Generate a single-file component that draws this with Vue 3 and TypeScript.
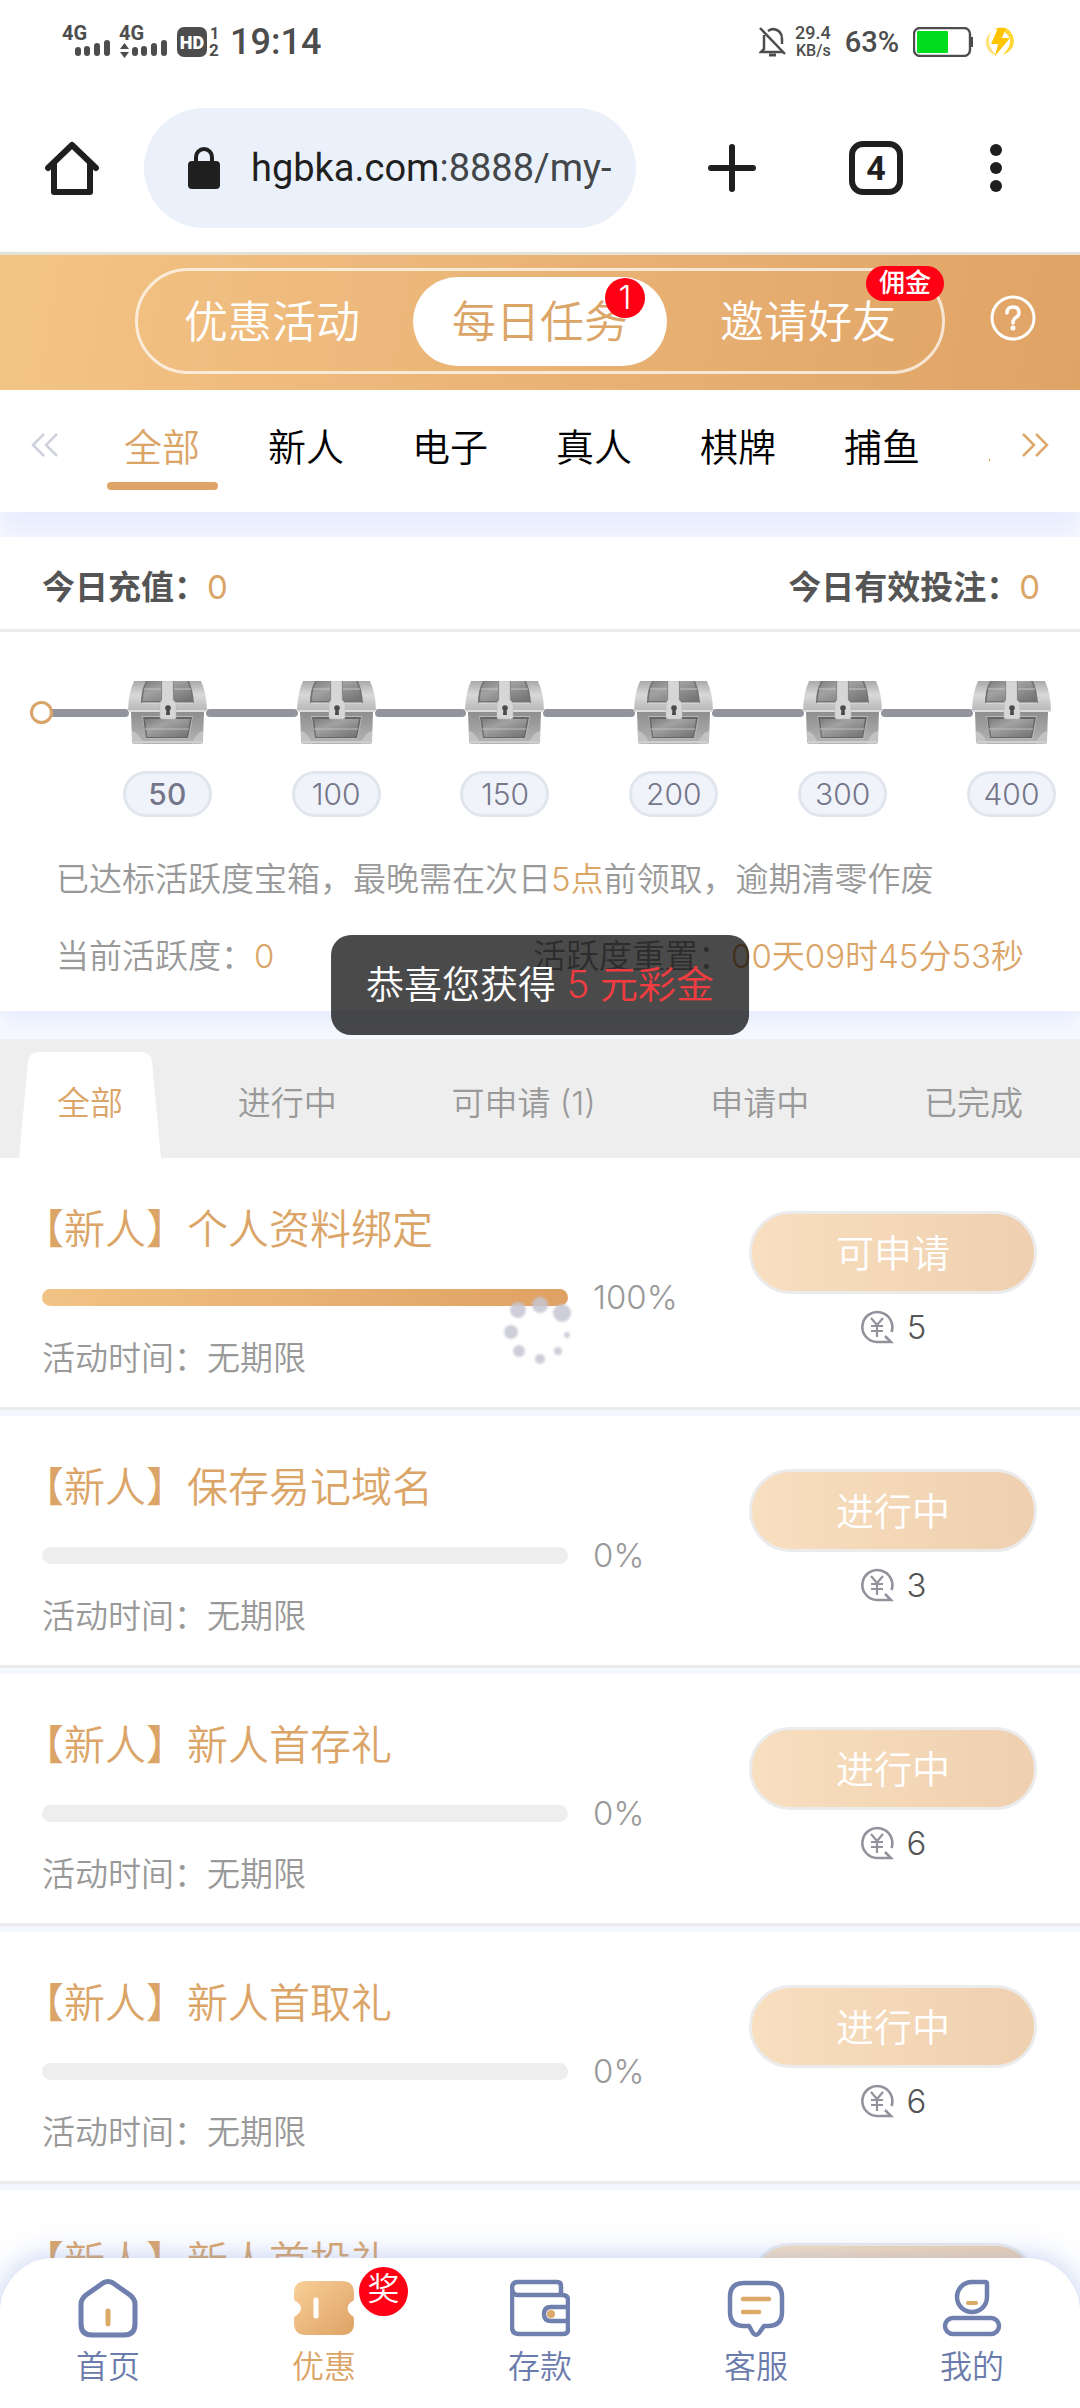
<script setup lang="ts">
import { ref } from 'vue'

interface Task {
  title: string
  percent: number
  status: string
  reward: number
}

const mainTabs = ['优惠活动', '每日任务', '邀请好友']
const activeMain = ref(1)

const categories = ['全部', '新人', '电子', '真人', '棋牌', '捕鱼', '彩票']
const activeCategory = ref(0)

const steps = [50, 100, 150, 200, 300, 400]

const filters = ['全部', '进行中', '可申请 (1)', '申请中', '已完成']
const activeFilter = ref(0)

const tasks: Task[] = [
  { title: '【新人】个人资料绑定', percent: 100, status: '可申请', reward: 5 },
  { title: '【新人】保存易记域名', percent: 0, status: '进行中', reward: 3 },
  { title: '【新人】新人首存礼', percent: 0, status: '进行中', reward: 6 },
  { title: '【新人】新人首取礼', percent: 0, status: '进行中', reward: 6 },
  { title: '【新人】新人首投礼', percent: 0, status: '进行中', reward: 6 },
]

const spinnerDots = [
  { x: 30, y: 6, r: 8 },
  { x: 52, y: 14, r: 9 },
  { x: 57, y: 36, r: 3 },
  { x: 48, y: 52, r: 4 },
  { x: 30, y: 60, r: 5 },
  { x: 9, y: 52, r: 6 },
  { x: 1, y: 33, r: 7 },
  { x: 8, y: 11, r: 8 },
]
</script>

<template>
  <div class="phone">
    <svg class="defs" width="0" height="0" aria-hidden="true">
      <defs>
        <linearGradient id="lid" x1="0" y1="0" x2="0" y2="1">
          <stop offset="0" stop-color="#a9a9a9" />
          <stop offset=".45" stop-color="#d9d9d9" />
          <stop offset="1" stop-color="#b5b5b5" />
        </linearGradient>
        <linearGradient id="body" x1="0" y1="0" x2="0" y2="1">
          <stop offset="0" stop-color="#8e8e8e" />
          <stop offset="1" stop-color="#b4b4b4" />
        </linearGradient>
        <linearGradient id="panel" x1="0" y1="0" x2="1" y2="1">
          <stop offset="0" stop-color="#7c7c7c" />
          <stop offset=".35" stop-color="#a2a2a2" />
          <stop offset="1" stop-color="#707070" />
        </linearGradient>
        <linearGradient id="ticket" x1="0" y1="0" x2="1" y2="1">
          <stop offset="0" stop-color="#f8cf98" />
          <stop offset="1" stop-color="#dea265" />
        </linearGradient>
        <symbol id="chest" viewBox="0 0 79 63">
          <path d="M3 31H76L75 60Q75 63 72 63H7Q4 63 4 60Z" fill="url(#body)" />
          <path d="M4 50Q12 52 15 63H7Q4 63 4 60ZM75 50Q67 52 64 63H72Q75 63 75 60Z" fill="#c2c2c2" />
          <path d="M14 35H65L61 58H18Z" fill="#b9b9b9" />
          <path d="M15 36H64L60 57H18Z" fill="#666" />
          <path d="M17 38H62L59 56H19Z" fill="url(#panel)" />
          <path d="M17 48H61" stroke="#bdbdbd" />
          <path d="M5 61H74" stroke="#cfcfcf" stroke-width="2" />
          <path d="M6 0H73Q79 13 79 31H0Q0 13 6 0Z" fill="url(#lid)" />
          <path d="M18 0H34V22H13Q13 9 18 0ZM45 0H61Q65 9 66 22H45Z" fill="#747474" />
          <path d="M20 0H33V20H15Q15 8 20 0ZM46 0H59Q63 8 64 20H46Z" fill="url(#panel)" />
          <path d="M16 8H33M46 8H63" stroke="#c4c4c4" />
          <path d="M14 22H65" stroke="#dedede" />
          <path d="M0 30H79" stroke="#dcdcdc" stroke-width="2" />
          <path d="M34 0H45V19L48 22V36Q48 38 46 38H34Q32 38 32 36V22L34 19Z" fill="#d6d6d6" stroke="#bdbdbd" stroke-width=".6" />
          <circle cx="40" cy="27" r="2.8" fill="#4a4a4a" />
          <path d="M38.500 28H41.500L42 34H38Z" fill="#4a4a4a" />
        </symbol>
      </defs>
    </svg>

    <header class="status">
      <svg class="signal" width="162" height="36" viewBox="60 24 162 36" fill="#4d4d4d">
        <text x="62" y="40" font-size="20" font-weight="700">4G</text>
        <path d="M78 50V53M87 49V53M97 46V53M107 43V53M135 50V53M144 49V53M154 46V53M164 43V53" stroke="#4d4d4d" stroke-width="6" stroke-linecap="round" />
        <text x="119" y="40" font-size="20" font-weight="700">4G</text>
        <path d="M120 49L124.500 43L129 49ZM120 52L124.500 58L129 52Z" />
        <rect x="177" y="27" width="30" height="30" rx="7" />
        <text x="192" y="49" font-size="18" font-weight="900" text-anchor="middle" fill="#fff">HD</text>
        <text x="210" y="39" font-size="16" font-weight="700">1</text>
        <text x="209" y="56" font-size="17" font-weight="700">2</text>
      </svg>
      <span class="clock">19:14</span>
      <span class="spacer"></span>
      <svg width="28" height="30" viewBox="0 0 28 30" fill="none" stroke="#4d4d4d" stroke-width="2.500">
        <path d="M5 8V22L2 25H24M9 4Q12 2 14 2Q23 3 23 12V17" />
        <path d="M1 1L26 27" />
        <path d="M10 28H17" stroke-width="3" />
      </svg>
      <span class="speed"><b>29.4</b><small>KB/s</small></span>
      <span class="percent">63%</span>
      <svg width="60" height="30" viewBox="0 0 60 30">
        <rect x="1" y="1" width="56" height="28" rx="6" fill="#fff" stroke="#4d4d4d" stroke-width="2.400" />
        <rect x="4" y="4" width="31" height="22" rx="1" fill="#00dc1e" />
        <path d="M59 10V20" stroke="#4d4d4d" stroke-width="2" />
      </svg>
      <svg class="charge" width="32" height="32" viewBox="0 0 32 32">
        <path d="M10 3Q24 -2 29 10Q33 24 18 29Q27 22 26 13Q23 4 10 3Z" fill="#ffd633" />
        <path d="M8 5Q-1 13 3 22Q6 28 13 30Q5 22 5 15Q5 9 8 5Z" fill="#ffe27a" />
        <path d="M14 2H22L18 12H26L11 30L14 18H7Z" fill="#ffc400" />
      </svg>
    </header>

    <div class="toolbar">
      <button class="tool home" aria-label="主页">
        <svg width="54" height="54" viewBox="0 0 54 54" fill="none" stroke="#1f1f1f" stroke-width="6" stroke-linejoin="round" stroke-linecap="round">
          <path d="M3 27L27 4L51 27M9 22V51H45V22" />
        </svg>
      </button>
      <button class="address">
        <svg width="32" height="42" viewBox="0 0 32 42">
          <rect y="14" width="32" height="28" rx="4" fill="#1f1f1f" />
          <path d="M8 16V10A8 8 0 0 1 24 10V16" fill="none" stroke="#1f1f1f" stroke-width="4" />
        </svg>
        <span class="url">hgbka.com<i>:8888/my-</i></span>
      </button>
      <button class="tool" aria-label="新标签页">
        <svg width="48" height="48" viewBox="0 0 48 48" stroke="#1f1f1f" stroke-width="6" stroke-linecap="round"><path d="M24 3V45M3 24H45" /></svg>
      </button>
      <button class="tool"><span class="tabs-count">4</span></button>
      <button class="tool menu" aria-label="菜单">
        <svg width="12" height="48" viewBox="0 0 12 48" fill="#1f1f1f"><circle cx="6" cy="6" r="6" /><circle cx="6" cy="24" r="6" /><circle cx="6" cy="42" r="6" /></svg>
      </button>
    </div>

    <main class="view">
      <div class="head">
        <nav class="switch">
          <button v-for="(tab, i) in mainTabs" :key="tab" :class="{ active: i === activeMain }" @click="activeMain = i">
            {{ tab }}
            <span v-if="i === 1" class="count">1</span>
            <span v-if="i === 2" class="tag">佣金</span>
          </button>
        </nav>
        <button class="help" aria-label="帮助">
          <svg width="46" height="46" viewBox="0 0 46 46" fill="none" stroke="#fff" stroke-width="3" stroke-linecap="round">
            <circle cx="23" cy="23" r="21" />
            <path d="M17 18Q17 12 23 12Q29 12 29 18Q29 21 25 23Q23 25 23 28" stroke-width="3.500" />
            <circle cx="23" cy="33" r="1" />
          </svg>
        </button>
      </div>

      <div class="categories">
        <button class="arrow" aria-label="上一页">
          <svg width="28" height="24" viewBox="0 0 28 24" fill="none" stroke="#cdd1dc" stroke-width="2.500"><path d="M13 1L2 12L13 23M26 1L15 12L26 23" /></svg>
        </button>
        <div class="scroller">
          <button v-for="(name, i) in categories" :key="name" :class="{ active: i === activeCategory }" @click="activeCategory = i">{{ name }}</button>
        </div>
        <button class="arrow" aria-label="下一页">
          <svg width="28" height="24" viewBox="0 0 28 24" fill="none" stroke="#dfa76a" stroke-width="2.500"><path d="M2 1L13 12L2 23M15 1L26 12L15 23" /></svg>
        </button>
      </div>

      <section class="card">
        <div class="totals">
          <span>今日充值：<em>0</em></span>
          <span>今日有效投注：<em>0</em></span>
        </div>
        <div class="track">
          <span class="dot"></span>
          <ol>
            <li v-for="(step, i) in steps" :key="step" :class="{ first: i === 0 }">
              <span class="line"></span>
              <svg class="chest" width="79" height="63"><use href="#chest" /></svg>
              <span class="points">{{ step }}</span>
            </li>
          </ol>
        </div>
        <p>已达标活跃度宝箱，最晚需在次日<em>5点</em>前领取，逾期清零作废</p>
        <div class="activity">
          <span>当前活跃度：<em>0</em></span>
          <span>活跃度重置：<em>00天09时45分53秒</em></span>
        </div>
      </section>

      <nav class="filters">
        <button v-for="(name, i) in filters" :key="name" :class="{ active: i === activeFilter }" @click="activeFilter = i">
          <svg v-if="i === activeFilter" class="flap" viewBox="0 0 142 106" preserveAspectRatio="none">
            <path d="M0 106L9 10Q10 0 20 0H122Q132 0 133 10L142 106Z" fill="#fff" />
          </svg>
          <span>{{ name }}</span>
        </button>
      </nav>

      <ul class="tasks">
        <li v-for="task in tasks" :key="task.title">
          <div class="info">
            <h2>{{ task.title }}</h2>
            <div class="progress">
              <div class="bar"><div class="fill" :style="{ width: task.percent + '%' }"></div></div>
              <span>{{ task.percent }}%</span>
            </div>
            <p>活动时间：无期限</p>
          </div>
          <div class="action">
            <button>{{ task.status }}</button>
            <div class="reward">
              <svg width="34" height="34" viewBox="0 0 34 34" fill="none" stroke="#92929c" stroke-width="2.600">
                <path d="M31.500 22A15 15 0 1 0 17 32H31L25 26" />
                <path d="M11 8L17 15L23 8M17 15V27M11 16H23M11 21H23" stroke-width="2.200" />
              </svg>
              <span>{{ task.reward }}</span>
            </div>
          </div>
        </li>
      </ul>

      <div class="toast" role="status">恭喜您获得 <em>5 元彩金</em></div>

      <svg class="spinner" width="60" height="66" viewBox="0 0 60 66" aria-hidden="true">
        <circle v-for="(dot, i) in spinnerDots" :key="i" :cx="dot.x" :cy="dot.y" :r="dot.r" />
      </svg>

      <nav class="bottom">
        <a href="#home">
          <svg width="60" height="60" viewBox="0 0 60 60" fill="none" stroke="#6f7fae" stroke-width="5" stroke-linejoin="round">
            <path d="M25 5Q30 2 35 5L52 17Q57 21 57 26V46Q57 57 46 57H14Q3 57 3 46V26Q3 21 8 17Z" />
            <path d="M30 33V46" stroke="#dba968" stroke-linecap="round" />
          </svg>
          首页
        </a>
        <a href="#offers" class="active">
          <svg width="60" height="60" viewBox="0 0 60 60">
            <path d="M12 3H48Q60 3 60 15V20Q60 23 57 24Q50 30 57 37Q60 38 60 41V45Q60 57 48 57H12Q0 57 0 45V41Q0 38 3 37Q11 30 3 24Q0 23 0 20V15Q0 3 12 3Z" fill="url(#ticket)" />
            <path d="M22 22V38" stroke="#fff" stroke-width="5" stroke-linecap="round" />
          </svg>
          优惠
          <span class="prize">奖</span>
        </a>
        <a href="#deposit">
          <svg width="60" height="60" viewBox="0 0 60 60" fill="none" stroke="#6f7fae" stroke-width="4.500" stroke-linejoin="round">
            <path d="M51 17V8Q51 4 47 4H8Q2 4 2 10Q2 17 8 17H52Q58 17 58 22V52Q58 56 53 56H9Q2 56 2 49V10" />
            <path d="M57 29H41Q34 29 34 36Q34 43 41 43H57" />
            <circle cx="41" cy="36" r="4" fill="#dba968" stroke="none" />
          </svg>
          存款
        </a>
        <a href="#service">
          <svg width="60" height="60" viewBox="0 0 60 60" fill="none" stroke="#6f7fae" stroke-width="4.500" stroke-linecap="round" stroke-linejoin="round">
            <path d="M18 5H42Q56 5 56 19V34Q56 48 42 48H38L33 55Q30 59 27 55L23 48H18Q4 48 4 34V19Q4 5 18 5Z" />
            <path d="M17 21H43M17 34H33" stroke="#dba968" />
          </svg>
          客服
        </a>
        <a href="#mine">
          <svg width="60" height="60" viewBox="0 0 60 60" fill="none" stroke="#6f7fae" stroke-width="4.500" stroke-linejoin="round">
            <path d="M30 4H43Q45 4 45 6V19A15 15 0 1 1 30 4Z" />
            <rect x="3" y="40" width="54" height="16" rx="8" />
            <path d="M26 25H34" stroke="#dba968" stroke-width="4" stroke-linecap="round" />
          </svg>
          我的
        </a>
      </nav>
    </main>
  </div>
</template>

<style>
body {
  margin: 0;
}
</style>

<style scoped>
* {
  box-sizing: border-box;
}
.phone {
  display: flex;
  flex-direction: column;
  height: 100vh;
  overflow: hidden;
  background: #fff;
  color: #999;
  font: 350 33px/50px Inter, 'Noto Sans CJK SC', sans-serif;
}
button {
  padding: 0;
  border: 0;
  background: none;
  color: inherit;
  font: inherit;
  white-space: nowrap;
}
svg {
  display: block;
  flex: none;
}
em,
i {
  font-style: normal;
}
em {
  color: #dba568;
}
h2,
p,
ul,
ol {
  margin: 0;
  padding: 0;
  list-style: none;
}
.defs {
  position: absolute;
}

/* system status bar */
.status {
  display: flex;
  align-items: center;
  flex: none;
  height: 84px;
  padding: 0 64px 0 60px;
  color: #4d4d4d;
  font-family: Roboto, sans-serif;
}
.signal {
  overflow: visible;
}
.clock {
  margin-left: 8px;
  font-size: 36px;
  font-weight: 500;
}
.spacer {
  flex: 1;
}
.speed {
  display: flex;
  flex-direction: column;
  align-items: flex-end;
  margin: 0 14px 0 8px;
  font-weight: 500;
  line-height: 18px;
}
.speed b {
  font-size: 18px;
  font-weight: 500;
}
.speed small {
  font-size: 16px;
}
.percent {
  margin-right: 14px;
  font-size: 29px;
  font-weight: 500;
}
.charge {
  margin-left: 11px;
}

/* browser toolbar */
.toolbar {
  display: flex;
  align-items: center;
  flex: none;
  height: 171px;
  padding-right: 36px;
  border-bottom: 3px solid #e3e0d9;
  color: #1f1f1f;
  font-family: Roboto, sans-serif;
}
.tool {
  display: flex;
  justify-content: center;
  align-items: center;
  flex: none;
  width: 144px;
  height: 120px;
}
.tool.menu {
  width: 96px;
}
.address {
  display: flex;
  align-items: center;
  flex: 1;
  min-width: 0;
  height: 120px;
  margin-right: 24px;
  padding: 0 12px 0 44px;
  border-radius: 60px;
  background: #eaf1fb;
}
.url {
  margin-left: 31px;
  font-size: 38px;
  font-weight: 400;
}
.url i {
  color: #444749;
}
.tabs-count {
  width: 54px;
  height: 54px;
  border: 6px solid #1f1f1f;
  border-radius: 14px;
  font-size: 34px;
  font-weight: 700;
  line-height: 43px;
}

/* page */
.view {
  position: relative;
  flex: 1;
  min-height: 0;
  overflow: hidden;
  background: #f8f9ff;
}
.head {
  display: flex;
  align-items: flex-start;
  height: 135px;
  padding: 13px 0 0 135px;
  background: linear-gradient(100deg, #f3c585, #edb87b 35%, #dfa365);
}
.switch {
  display: flex;
  flex: 1;
  height: 106px;
  border: 3px solid rgba(255, 255, 255, 0.7);
  border-radius: 53px;
}
.switch button {
  position: relative;
  flex: 1;
  margin: 6px 7px 5px;
  border-radius: 45px;
  color: #fff;
  font-size: 44px;
  line-height: 82px;
}
.switch .active {
  background: #fff;
  color: #dba568;
}
.count {
  position: absolute;
  top: 1px;
  right: 22px;
  width: 40px;
  height: 40px;
  border-radius: 50%;
  background: #ff0014;
  color: #fff;
  font-size: 33px;
  line-height: 38px;
}
.tag {
  position: absolute;
  top: -11px;
  right: -9px;
  width: 78px;
  height: 35px;
  border-radius: 18px;
  background: #ff0014;
  font-size: 26px;
  font-weight: 500;
  line-height: 34px;
}
.help {
  display: flex;
  justify-content: center;
  align-items: center;
  width: 135px;
  height: 100px;
}
.categories {
  display: flex;
  height: 122px;
  background: #fff;
  box-shadow: 0 20px 20px #e8edfe;
}
.arrow {
  display: flex;
  justify-content: center;
  align-items: center;
  flex: none;
  width: 90px;
  height: 110px;
}
.scroller {
  display: flex;
  flex: 1;
  min-width: 0;
  overflow: hidden;
}
.scroller button {
  display: flex;
  flex-direction: column;
  align-items: center;
  flex: none;
  width: 144px;
  padding-top: 28px;
  color: #000;
  font-size: 38px;
  line-height: 58px;
}
.scroller .active {
  color: #dba568;
}
.scroller .active::after {
  width: 111px;
  height: 8px;
  margin-top: 6px;
  border-radius: 4px;
  background: #dfa467;
  content: '';
}
.card {
  position: relative;
  margin: 25px 0 28px;
  padding-bottom: 29px;
  background: #fff;
  box-shadow: 0 12px 24px #e6ecfd;
}
.totals {
  display: flex;
  justify-content: space-between;
  padding: 25px 40px 17px 42px;
  border-bottom: 3px solid #ebebeb;
  color: #555;
  font-weight: 600;
}
.totals em {
  font-weight: 400;
}
.track {
  display: flex;
  align-items: flex-start;
  padding: 49px 24px 0 30px;
}
.dot {
  z-index: 1;
  width: 23px;
  height: 23px;
  margin: 20px -10px 0 0;
  border: 3px solid #d9a46a;
  border-radius: 50%;
  background: #fff;
}
.track ol {
  display: flex;
  flex: 1;
}
.track li {
  display: grid;
  grid-template-columns: 1fr 89px;
  flex: 1;
  row-gap: 27px;
  align-items: center;
  justify-items: center;
}
.line {
  justify-self: stretch;
  height: 8px;
  margin: 0 -6px;
  border-radius: 4px;
  background: #92949e;
}
.chest {
  position: relative;
}
.points {
  grid-column: 2;
  width: 89px;
  height: 46px;
  border: 3px solid #e1e5ed;
  border-radius: 23px;
  background: #f1f3fa;
  color: #74768a;
  font-size: 30px;
  line-height: 40px;
  text-align: center;
}
.first .line {
  margin-left: 0;
}
.first .points {
  font-weight: 500;
}
.card p {
  margin: 37px 56px 27px;
  white-space: nowrap;
}
.activity {
  display: flex;
  justify-content: space-between;
  padding: 0 56px 1px;
}
.filters {
  display: flex;
  justify-content: space-between;
  height: 119px;
  padding: 0 57px;
  background: #eee;
  line-height: 128px;
}
.filters button {
  position: relative;
}
.filters .active {
  color: #dba568;
}
.filters span {
  position: relative;
}
.flap {
  position: absolute;
  right: -38px;
  bottom: 0;
  left: -38px;
  width: 142px;
  height: 106px;
}
.tasks li {
  display: flex;
  justify-content: space-between;
  height: 258px;
  padding: 0 43px 0 42px;
  border-bottom: 6px solid #f5f7fe;
  background: #fff;
  box-shadow: inset 0 -3px #ebebeb;
}
.info {
  flex: 1;
  padding-top: 41px;
}
.info h2 {
  margin-left: -19px;
  color: #dba568;
  font-size: 41px;
  font-weight: inherit;
  line-height: 60px;
}
.progress {
  display: flex;
  align-items: center;
  gap: 25px;
  margin: 13px 0 11px;
}
.bar {
  width: 526px;
  height: 17px;
  border-radius: 9px;
  background: #eee;
}
.fill {
  height: 100%;
  border-radius: 9px;
  background: linear-gradient(90deg, #f1c384, #dfa163);
}
.action {
  width: 288px;
  padding-top: 53px;
}
.action button {
  width: 100%;
  height: 83px;
  border: 3px solid #ebebeb;
  border-radius: 42px;
  background: linear-gradient(90deg, #f8dfbf, #efd0b0);
  color: #fff;
  font-size: 38px;
  line-height: 74px;
}
.reward {
  display: flex;
  justify-content: center;
  align-items: center;
  gap: 13px;
  margin-top: 8px;
  color: #555;
}

.toast {
  position: absolute;
  top: 680px;
  left: 50%;
  padding: 0 35px;
  border-radius: 20px;
  background: rgba(0, 0, 0, 0.71);
  color: #fff;
  font-size: 38px;
  line-height: 98px;
  height: 100px;
  white-space: nowrap;
  transform: translateX(-50%);
}
.toast em {
  color: #f23c40;
}
.spinner {
  position: absolute;
  top: 50%;
  left: 50%;
  overflow: visible;
  fill: rgba(197, 197, 210, 0.85);
  filter: blur(1px);
  transform: translate(-50%, -50%);
}

.bottom {
  position: absolute;
  right: 0;
  bottom: 0;
  left: 0;
  display: flex;
  height: 150px;
  border-radius: 54px 54px 0 0;
  background: #fff;
  box-shadow: 0 0 30px rgba(125, 155, 230, 0.5);
}
.bottom a {
  position: relative;
  display: flex;
  flex-direction: column;
  align-items: center;
  flex: 1;
  padding-top: 20px;
  color: #6b7bab;
  font-size: 32px;
  line-height: 56px;
  text-decoration: none;
}
.bottom .active {
  color: #dba568;
}
.bottom svg {
  margin-bottom: 1px;
}
.prize {
  position: absolute;
  top: 9px;
  left: 143px;
  width: 49px;
  height: 49px;
  border-radius: 50%;
  background: #ff0014;
  color: #fff;
  line-height: 44px;
  text-align: center;
}
</style>
